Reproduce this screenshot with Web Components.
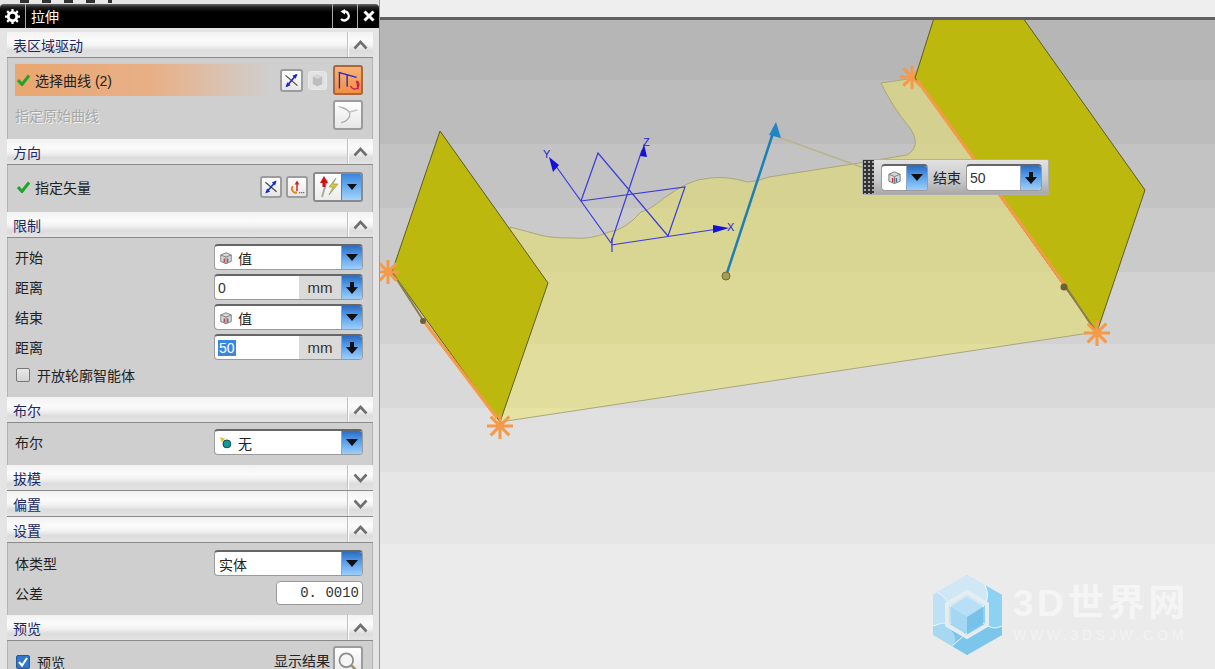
<!DOCTYPE html>
<html><head><meta charset="utf-8">
<style>
html,body{margin:0;height:100%;overflow:hidden;background:#e9e9e9}
body{font:14px "Liberation Sans","Noto Sans CJK SC",sans-serif;color:#222}
cad-app{height:669px}
</style></head><body>
<cad-app>
  <cad-panel slot="panel">
    <cad-title>拉伸</cad-title>
    <cad-section heading="表区域驱动" pad="6px 0 5px" h="81">
      <cad-row ok hl><span>选择曲线 (2)</span>
        <span slot="end" class="g">
          <cad-btn w="23" h="23" icon="infer" style="margin-right:5px"></cad-btn><cad-btn w="19" h="19" icon="cube" flat style="margin-right:6px"></cad-btn><cad-btn w="30" h="30" icon="curve" on></cad-btn>
        </span>
      </cad-row>
      <cad-row dis h="37"><span>指定原始曲线</span><cad-btn slot="end" w="30" h="30" icon="orig"></cad-btn></cad-row>
    </cad-section>
    <cad-section heading="方向" pad="5px 0 7px" h="47">
      <cad-row ok h="34" tick><span>指定矢量</span>
        <span slot="end" class="g">
          <cad-btn w="22" h="22" icon="infer" style="margin-right:4px"></cad-btn><cad-btn w="22" h="22" icon="vec" style="margin-right:5px"></cad-btn><cad-split></cad-split>
        </span>
      </cad-row>
    </cad-section>
    <cad-section heading="限制" pad="4px 0 8px" h="159">
      <cad-row><span>开始</span><cad-select slot="end" icon="cube">值</cad-select></cad-row>
      <cad-row><span>距离</span><cad-num slot="end" value="0"></cad-num></cad-row>
      <cad-row><span>结束</span><cad-select slot="end" icon="cube">值</cad-select></cad-row>
      <cad-row><span>距离</span><cad-num slot="end" value="50" sel></cad-num></cad-row>
      <cad-row h="26"><cad-check>开放轮廓智能体</cad-check></cad-row>
    </cad-section>
    <cad-section heading="布尔" pad="4px 0 7px" h="42">
      <cad-row><span>布尔</span><cad-select slot="end" icon="bool">无</cad-select></cad-row>
    </cad-section>
    <cad-section heading="拔模" closed></cad-section>
    <cad-section heading="偏置" closed></cad-section>
    <cad-section heading="设置" pad="5px 0 6px" h="72">
      <cad-row><span>体类型</span><cad-select slot="end">实体</cad-select></cad-row>
      <cad-row h="29"><span>公差</span><cad-tol slot="end">0. 0010</cad-tol></cad-row>
    </cad-section>
    <cad-section heading="预览" pad="5px 0 0" h="40">
      <cad-row h="32"><cad-check on>预览</cad-check>
        <span slot="end" class="g"><span style="margin-right:3px">显示结果</span><cad-btn w="30" h="32" icon="lens"></cad-btn></span>
      </cad-row>
    </cad-section>
  </cad-panel>
  <cad-view slot="view">
    <cad-float></cad-float>
    <cad-logo></cad-logo>
  </cad-view>
</cad-app>
<script>
const ICONS={
 infer:`<svg viewBox="0 0 20 20" width="100%" height="100%"><path d="M3 4 17 16" stroke="#444" stroke-width="1.4"/><path d="M16 3 4 17" stroke="#1a2ac8" stroke-width="2"/><path d="M17 2 11 4.500 15 8ZM3 18 9 15.500 5 12Z" fill="#1a2ac8"/></svg>`,
 cube:`<svg viewBox="0 0 16 16" width="100%" height="100%"><path d="M8 2 14 4.500V12L8 14.500 2 12V4.500Z" fill="#d8d8d8" stroke="#777"/><path d="M2 4.500 8 7 14 4.500M8 7V14.500" fill="none" stroke="#777"/><path d="M6 8.500V13" stroke="#c33" stroke-width="1.500"/><path d="M10 8.500V13" stroke="#46a" stroke-width="1.500"/></svg>`,
 gcube:`<svg viewBox="0 0 16 16" width="100%" height="100%"><path d="M3 4 8 2 13 4V12L8 14 3 12Z" fill="#bdbdbd"/><path d="M3 4 8 6 13 4 8 2Z" fill="#d4d4d4"/></svg>`,
 curve:`<svg viewBox="0 0 28 28" width="100%" height="100%"><path d="M3 5 24 11M4 5V24M13 8V22" stroke="#1c2ad0" stroke-width="1.600" fill="none"/><path d="M17 21a5 5 0 1 0 7-6M24 15 26 25" stroke="#d01c50" stroke-width="1.600" fill="none"/></svg>`,
 orig:`<svg viewBox="0 0 28 28" width="100%" height="100%"><path d="M7 5Q18 9 16 15T6 23" stroke="#a8a8a8" stroke-width="1.500" fill="none"/><path d="M15 11 25 8M3 4 8 6" stroke="#bcbcbc" stroke-width="1.500"/></svg>`,
 vec:`<svg viewBox="0 0 20 20" width="100%" height="100%"><path d="M5 9a5 5 0 0 0 2 8h3" fill="none" stroke="#e08a20" stroke-width="2.600"/><path d="M10 15V6" stroke="#c22" stroke-width="1.800"/><path d="M10 2 7 7H13Z" fill="#c22"/><path d="M13 17h1M15.500 17h1M18 17h1" stroke="#222" stroke-width="1.500"/></svg>`,
 lens:`<svg viewBox="0 0 28 28" width="100%" height="100%"><circle cx="12" cy="12" r="8" fill="#f6f6f6" stroke="#8a8a8a" stroke-width="2"/><path d="M18 18 26 26" stroke="#9a9a5a" stroke-width="3"/></svg>`,
 bool:`<svg viewBox="0 0 16 16" width="100%" height="100%"><path d="M1 1 7 3 3 7Z" fill="#d8c830"/><circle cx="9" cy="9" r="4.500" fill="#119a9a" stroke="#134" stroke-width="1"/></svg>`
};
const DROP=`<svg viewBox="0 0 12 8" width="12" height="8"><path d="M0 0H12L6 7Z" fill="#111"/></svg>`;
const DOWN=`<svg viewBox="0 0 12 12" width="12" height="12"><path d="M4 0H8V5H12L6 12 0 5H4Z" fill="#111"/></svg>`;
function def(name,css,html){
  customElements.define(name,class extends HTMLElement{
    constructor(){super();this.attachShadow({mode:"open"});}
    connectedCallback(){
      const h=typeof html==="function"?html(this):html;
      this.shadowRoot.innerHTML=`<style>${css}</style>${h}`;
    }
  });
}
const at=(e,n,d="")=>e.hasAttribute(n)?e.getAttribute(n):d;
def("cad-app",`:host{display:flex;width:1215px;overflow:hidden}
 ::slotted(cad-panel){flex:0 0 380px}::slotted(cad-view){flex:1}`,
 `<slot name="panel"></slot><slot name="view"></slot>`);
def("cad-panel",`:host{display:flex;flex-direction:column;height:669px;overflow:hidden;background:#e4e4e4;box-sizing:border-box;border-right:1px solid #9a9a9a;padding-top:4px;position:relative}
 .strip{position:absolute;left:20px;top:0;width:92px;height:3px;background:repeating-linear-gradient(90deg,#333 0 9px,#e8e8e8 9px 22px)}`,
 `<div class="strip"></div><slot></slot>`);
def("cad-title",`:host{display:flex;align-items:center;height:24px;flex:none;margin-bottom:4px;background:linear-gradient(#6a6a6a 0,#222 3px,#000 8px,#000 100%);border-radius:4px 4px 0 0;color:#fff;font-size:14px;box-sizing:border-box}
 .c{display:flex;align-items:center;justify-content:center;height:100%;border-right:1px solid #aaa}
 .t{flex:1;padding-left:5px}
 .r{border-left:1px solid #aaa;border-right:0}`,
 `<div class="c" style="width:25px"><svg width="15" height="15" viewBox="0 0 16 16"><circle cx="8" cy="8" r="4.500" fill="none" stroke="#fff" stroke-width="3"/><path d="M8 0V3M8 13V16M0 8H3M13 8H16M2.300 2.300 4.400 4.400M11.600 11.600 13.700 13.700M13.700 2.300 11.600 4.400M4.400 11.600 2.300 13.700" stroke="#fff" stroke-width="2.400"/></svg></div>
  <div class="t"><slot></slot></div>
  <div class="c r" style="width:24px"><svg width="14" height="14" viewBox="0 0 14 14"><path d="M5 2.500A4.500 4.500 0 1 1 3 10" fill="none" stroke="#fff" stroke-width="2.200"/><path d="M7 0 2.500 2.500 7 5.500Z" fill="#fff"/></svg></div>
  <div class="c r" style="width:21px"><svg width="12" height="12" viewBox="0 0 12 12"><path d="M1.500 1.500 10.500 10.500M10.500 1.500 1.500 10.500" stroke="#fff" stroke-width="3"/></svg></div>`);
def("cad-section",`:host{display:block;flex:none;margin:0 6px 0 7px}
 .h{display:flex;height:26px;box-sizing:border-box;align-items:center;background:linear-gradient(#f2f2f2 0,#fbfbfb 35%,#f2f2f2 55%,#dcdcdc 75%,#e2e2e2 95%);border-bottom:1px solid #8a8a8a;color:#1c2768;font-size:14px;padding-left:6px}
 .n{flex:1}
 .a{width:25px;height:100%;border-left:1px solid #c0c0c0;box-shadow:inset 1px 0 #fff;display:flex;align-items:center;justify-content:center}
 .b{background:#cfcfcf;box-sizing:border-box;overflow:hidden;padding-left:7px;padding-right:9px;border:solid #b4b4b4;border-width:0 1px}`,
 e=>{const c=e.hasAttribute("closed");
  return `<div class="h"><span class="n">${at(e,"heading")}</span><span class="a"><svg width="15" height="10" viewBox="0 0 15 10"><path d="${c?"M1.500 1.500 7.500 8 13.500 1.500":"M1.500 8.500 7.500 2 13.500 8.500"}" fill="none" stroke="#707070" stroke-width="2.600"/></svg></span></div>`+
  (c?"":`<div class="b" style="height:${at(e,"h")}px;padding-top:${at(e,"pad").split(" ")[0]}"><slot></slot></div>`);});
def("cad-row",`:host{display:flex;align-items:center;justify-content:space-between;box-sizing:border-box;white-space:nowrap}
 .l{display:flex;align-items:center;flex:1;align-self:stretch;margin-right:10px}
 .hl{background:linear-gradient(90deg,#e9a66f 0,#e8b088 55%,rgba(232,176,136,0) 100%)}
 .dis{color:#a8a8a8;text-shadow:1px 1px 0 #eee}
 svg{margin:0 5px 0 2px;flex:none}`,
 e=>{e.style.height=at(e,"h",e.hasAttribute("hl")?"32":"30")+"px";
  const ok=e.hasAttribute("ok");
  return `<div class="l ${e.hasAttribute("hl")?"hl":""} ${e.hasAttribute("dis")?"dis":""}">${ok?`<svg width="13" height="12" viewBox="0 0 13 12"><path d="M1 6 5 10.500 12 1.500" fill="none" stroke="#1fa52a" stroke-width="3"/></svg>`:""}<slot></slot></div><slot name="end"></slot>`;});
def("cad-btn",`:host{display:inline-flex;box-sizing:border-box;vertical-align:middle;background:linear-gradient(#fff,#e6e6e6);border:2px solid #9c9c9c;border-radius:3px;padding:1px;flex:none}
 :host([flat]){background:#e2e2e2;border:1px solid #e8e8e8}
 :host([on]){background:linear-gradient(#f9b277,#f28f45);border-color:#a8683a}`,
 e=>{e.style.width=at(e,"w")+"px";e.style.height=at(e,"h")+"px";
   return ICONS[e.hasAttribute("flat")?"gcube":at(e,"icon")];});
def("cad-split",`:host{display:inline-flex;width:50px;height:30px;box-sizing:border-box;border:2px solid #8a8a8a;border-radius:3px;vertical-align:middle;background:#fff;overflow:hidden}
 .i{flex:1;display:flex;align-items:center;justify-content:center;background:linear-gradient(#fff,#ececec)}
 .d{width:19px;display:flex;align-items:center;justify-content:center;background:linear-gradient(#3f86d8,#5ea6ee 40%,#a6d4fa);border-left:1px solid #5a7ab0}`,
 `<div class="i"><svg width="24" height="24" viewBox="0 0 24 24"><path d="M6 22 11 5" stroke="#aaa" stroke-width="2"/><path d="M8 12V6" stroke="#c11" stroke-width="3"/><path d="M8 1 4 8H12Z" fill="#c11"/><path d="M20 3 13 12H17L13 20 22 9H17Z" fill="#d8c830" stroke="#887" stroke-width=".6"/></svg></div><div class="d"><svg width="10" height="6" viewBox="0 0 10 6"><path d="M0 0H10L5 6Z" fill="#111"/></svg></div>`);
const BOX=`display:inline-flex;box-sizing:border-box;height:26px;background:#fff;border:1px solid #9a9a9a;border-top:2px solid #666;border-radius:4px;overflow:hidden;flex:none;`;
const BTN=`.d{width:20px;display:flex;align-items:center;justify-content:center;background:linear-gradient(#2e6cc0,#4d96e6 35%,#9ccffa);border-left:1px solid #8fa8c8}`;
def("cad-select",`:host{${BOX}width:149px}
 .t{flex:1;display:flex;align-items:center;padding-left:4px;font-size:14px}
 .i{width:14px;height:14px;margin-right:5px}
 ${BTN}`,
 e=>`<div class="t">${e.hasAttribute("icon")?`<span class="i">${ICONS[at(e,"icon")]}</span>`:""}<slot></slot></div><div class="d">${DROP}</div>`);
def("cad-num",`:host{${BOX}width:149px}
 .t{flex:1;display:flex;align-items:center;padding-left:3px;font:14px "Liberation Sans",sans-serif;color:#333}
 .m{width:42px;background:#dadada;display:flex;align-items:center;justify-content:center;font:15px "Liberation Sans",sans-serif;color:#333}
 .s{background:#3b87e0;color:#fff;padding:0 1px}
 ${BTN}`,
 e=>`<div class="t"><span class="${e.hasAttribute("sel")?"s":""}">${at(e,"value")}</span></div><div class="m">mm</div><div class="d">${DOWN}</div>`);
def("cad-tol",`:host{${BOX}width:87px;height:24px;justify-content:flex-end;align-items:center;padding-right:3px;border-width:1px;border-color:#999;font:14px "Liberation Mono","Noto Sans CJK SC",monospace;color:#333}`,`<slot></slot>`);
def("cad-check",`:host{display:inline-flex;align-items:center}
 .b{width:14px;height:14px;box-sizing:border-box;border:1px solid #777;border-radius:2px;background:linear-gradient(#e8e8e8,#d4d4d4);margin:0 7px 0 1px;display:block}
 .on{background:#2f78c8;border-color:#27589a}`,
 e=>`<span class="b ${e.hasAttribute("on")?"on":""}">${e.hasAttribute("on")?`<svg width="12" height="12" viewBox="0 0 12 12" style="display:block"><path d="M2 6 5 9.500 10 2" fill="none" stroke="#fff" stroke-width="2"/></svg>`:""}</span><slot></slot>`);
const star=(x,y,r=13)=>{const d=r*.72;return `<g stroke="#f59a48" stroke-width="3"><path d="M${x} ${y-r}V${y+r}M${x-r} ${y}H${x+r}M${x-d} ${y-d}L${x+d} ${y+d}M${x-d} ${y+d}L${x+d} ${y-d}"/></g>`;};
const bands=(cols,stops)=>{let s="";cols.forEach((c,i)=>{const a=i?stops[i-1]:0,b=i<stops.length?stops[i]:700;s+=`${c} ${a}px ${b}px,`;});return s.slice(0,-1);};
const STOPS=[60,124,188,252,324,388,452,524];
const svgStops=(cols)=>{let s="";cols.forEach((c,i)=>{const a=i?STOPS[i-1]+20:20,b=i<STOPS.length?STOPS[i]+20:669;s+=`<stop offset="${(a-20)/649}" stop-color="${c}"/><stop offset="${(b-20)/649}" stop-color="${c}"/>`;});return s;};
def("cad-view",`:host{display:flex;flex-direction:column;height:669px}
 .top{height:17px;background:#eeeeee;border-bottom:3px solid #606060;flex:none}
 .c{flex:1;position:relative;overflow:hidden;background:linear-gradient(${bands(["#b6b6b6","#bcbcbc","#c3c3c3","#cacaca","#d2d2d2","#d9d9d9","#e0e0e0","#e6e6e6","#ebebeb"],STOPS)})}
 svg.s{position:absolute;left:0;top:0}
 text{font:11px "Liberation Sans",sans-serif;fill:#1a22d8}`,
 `<div class="top"></div><div class="c">
 <svg class="s" width="835" height="649" viewBox="380 20 835 649">
  <defs><linearGradient id="sh" gradientUnits="userSpaceOnUse" x1="0" y1="20" x2="0" y2="669">${svgStops(["#d2ce8e","#d4d090","#d6d292","#d9d593","#dcd896","#e1dd9c","#e6e2a2","#e8e4a6","#e8e4a6"])}</linearGradient></defs>
  <path d="M500 422 1096 332 1060 280 915 78 881 83 Q893 108 910 128 Q922 146 907 155 L859 163 769 177 Q757 182 747 182 Q728 176 710 178 Q697 179 687 184 Q675 190 664 198 Q650 210 641 212 Q625 230 609 232 Q590 240 572 238 Q550 238 540 235 L510 227Z" fill="url(#sh)" stroke="#a9a77a" stroke-width="1"/>
  <path d="M778 137 864 168" stroke="#b8b48a" stroke-width="1.500"/>
  ${star(912,77,12)}
  <path d="M440 131 548 283 500 422 392 272Z" fill="#bdb80e" stroke="#5f5c20" stroke-width="1"/>
  <path d="M934 18H1023L1145 190 1097 332 915 78Z" fill="#bdb80e" stroke="#5f5c20" stroke-width="1"/>
  <path d="M423 320 497 418M917 80 1064 284" stroke="#f59a48" stroke-width="3"/>
  <path d="M392 272 423 320M1064 284 1096 332" stroke="#8a7f50" stroke-width="2"/>
  <circle cx="423" cy="321" r="3" fill="#6d5f38"/><circle cx="1064" cy="287" r="3.500" fill="#6d5f38"/>
  ${star(388,272,12)}${star(500,426)}${star(1097,333)}
  <g stroke="#3a3ae0" stroke-width="1.200" fill="none">
   <path d="M581 201 685 187 668 236M581 201 598 153 668 236M612 252V238"/>
   <path d="M611 243 553 162"/><path d="M611 243 642 150"/><path d="M611 245 718 229"/>
  </g>
  <path d="M549 157 559 165 553 172Z M644 144 647 157 640 156Z M729 228 713 233 713 225Z" fill="#1212d8"/>
  <text x="543" y="158">Y</text><text x="643" y="146">Z</text><text x="727" y="231">X</text>
  <path d="M726 276 774 130" stroke="#1f7fb4" stroke-width="2.500"/><path d="M776 122 781 138 769 135Z" fill="#1f86c6"/>
  <circle cx="726" cy="276" r="4" fill="#a89c50" stroke="#6e6a38"/>
 </svg>
 <slot></slot></div>`);
def("cad-float",`:host{position:absolute;left:482px;top:139px;display:flex;align-items:center;height:36px;width:187px;box-sizing:border-box;background:linear-gradient(#e2e2e2,#c8c8c8 60%,#a8a8a8);border:1px solid #b0b0b0;border-radius:2px}
 .g{width:11px;height:100%;background:#333;background-image:radial-gradient(#aaa 1px,transparent 1.200px);background-size:4px 4px;margin-right:7px}
 .s{${BOX}width:47px;height:27px;margin-right:5px}
 .i{flex:1;display:flex;align-items:center;justify-content:center}.i span{width:15px;height:15px}
 .n{${BOX}width:76px;height:27px;margin-left:5px;font:14px "Liberation Sans",sans-serif;align-items:stretch;color:#333}
 .v{flex:1;display:flex;align-items:center;padding-left:3px}
 ${BTN}`,
 `<div class="g"></div><div class="s"><div class="i"><span>${ICONS.cube}</span></div><div class="d">${DROP}</div></div><span>结束</span><div class="n"><div class="v">50</div><div class="d">${DOWN}</div></div>`);
def("cad-logo",`:host{position:absolute;left:553px;top:554px;display:flex;align-items:center;gap:10px;pointer-events:none}
 .t{display:flex;flex-direction:column;color:#f5f5f5;margin-top:-3px}
 .a{font:700 37px/40px "Liberation Sans","Noto Sans CJK SC",sans-serif;letter-spacing:3.500px;white-space:nowrap}
 .b{font:14px/16px "Liberation Sans",sans-serif;letter-spacing:3.700px;white-space:nowrap;margin-top:3px;color:#f3f3f3}`,
 `<svg width="70" height="82" viewBox="934 574 70 82">
  <path d="M968 575 1003 595V635L968 655 934 635V595Z" fill="#a6d8f2"/>
  <path d="M938 592 968 575 986 585Q992 598 984 607L968 597 952 607Q946 596 938 592Z" fill="#d0e8f6"/>
  <path d="M986 585 1003 595V626Q994 631 984 623V607Q992 598 986 585Z" fill="#8ed2f3"/>
  <path d="M1003 626V635L968 655 953 646Q960 640 952 630L968 633 984 623Q994 631 1003 626Z" fill="#7cc6ec"/>
  <path d="M934 595 938 592Q946 596 952 607V623Q942 622 934 626Z" fill="#bfe1f5"/>
  <path d="M938 592Q946 596 952 607M986 585Q992 598 984 607M1003 626Q994 631 984 623M968 633Q960 640 953 646M934 626Q942 622 952 623" fill="none" stroke="#eef7fc" stroke-width="1"/>
  <path d="M968 592 988 604V625L968 637 948 625V604Z" fill="none" stroke="#e6edf0" stroke-width="4"/>
  <path d="M968 597 984 607 968 617 952 607Z" fill="#b8dff5"/><path d="M952 607 968 617V633L952 623Z" fill="#a5d6f2"/><path d="M984 607 968 617V633L984 623Z" fill="#78c2e9"/>
 </svg><div class="t"><span class="a">3D世界网</span><span class="b">WWW.3DSJW.COM</span></div>`);
</script>
</body></html>
